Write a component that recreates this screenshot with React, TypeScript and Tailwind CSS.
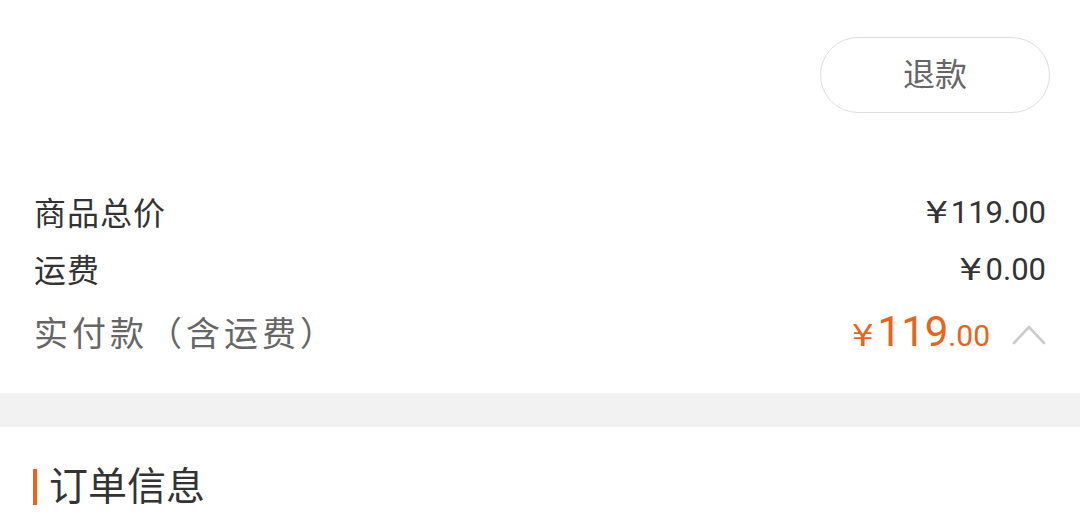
import React from "react";

function Yen({ size }: { size: "sm" | "lg" }) {
  return size === "sm" ? (
    <span className="inline-block font-['DejaVu_Sans'] text-[30px] leading-none scale-x-[1.22] ml-[3px] mr-[5px]">¥</span>
  ) : (
    <span className="inline-block font-['DejaVu_Sans'] text-[31px] leading-none scale-x-[1.12] ml-[2px] mr-[5px]">¥</span>
  );
}

export default function App() {
  return (
    <div className="w-[1080px] h-[513px] bg-white overflow-hidden font-['Roboto','Noto_Sans_CJK_SC',sans-serif]">
      <div className="flex justify-end pt-[37px] pr-[30px]">
        <button className="w-[230px] h-[76px] rounded-full border-[1.5px] border-[#dedede] text-[32px] text-[#666] flex items-center justify-center">
          退款
        </button>
      </div>

      <div className="px-[34px] mt-[72px] text-[#333]">
        <div className="flex items-center justify-between h-[57px]">
          <span className="text-[32px] tracking-[1px]">商品总价</span>
          <span className="text-[31px] flex items-baseline">
            <Yen size="sm" />119.00
          </span>
        </div>
        <div className="flex items-center justify-between h-[57px]">
          <span className="text-[32px] tracking-[1px]">运费</span>
          <span className="text-[31px] flex items-baseline">
            <Yen size="sm" />0.00
          </span>
        </div>
        <div className="flex items-center justify-between h-[70px]">
          <span className="text-[34px] tracking-[4px] text-[#666]">实付款（含运费）</span>
          <div className="flex items-center">
            <span className="text-[#e8641b] flex items-baseline">
              <Yen size="lg" />
              <span className="text-[42px] leading-none">119</span>
              <span className="text-[30px]">.00</span>
            </span>
            <svg className="ml-[22px]" width="34" height="22" viewBox="0 0 34 22" fill="none">
              <path
                d="M2 20 L17 4 L32 20"
                stroke="#cccccc"
                strokeWidth="2.6"
                strokeLinecap="round"
                strokeLinejoin="round"
              />
            </svg>
          </div>
        </div>
      </div>

      <div className="mt-[24px] h-[34px] bg-[#f2f2f2]" />

      <div className="px-[33px] pt-[40px] flex items-center">
        <div className="w-[4px] h-[36px] bg-[#e8641b]" />
        <span className="ml-[12px] text-[39px] leading-[40px] text-[#333]">订单信息</span>
      </div>
    </div>
  );
}
